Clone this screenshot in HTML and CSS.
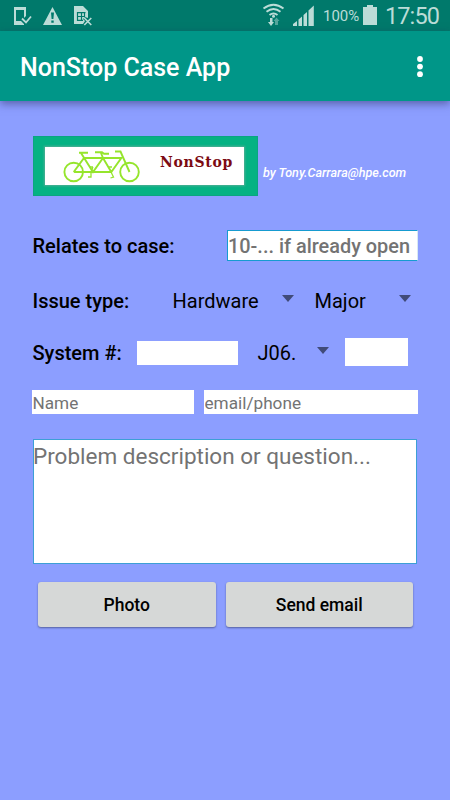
FILE: index.html
```html
<!DOCTYPE html>
<html lang="en">
<head>
<meta charset="utf-8">
<title>NonStop Case App</title>
<link rel="stylesheet" href="styles.css">
</head>
<body>
<header class="status">
  <svg class="status-left" viewBox="0 0 100 31" width="100" height="31">
    <path fill-rule="evenodd" d="M14 7h12v9l-2 2v-8h-8v11h5l3 3v1H14z"/>
    <path d="M22 18.500l4 4 5-6" fill="none" stroke="#bbdcd7" stroke-width="1.800"/>
    <path fill-rule="evenodd" d="M52.500 7L62 25H43zM51 12.500l.6 6.500h1.800l.6-6.500zM51.300 20.500v2.300h2.400v-2.300z"/>
    <path d="M74 6h9l5 5v7l-3-1-2 2 2 2-2 3h-9z"/>
    <path d="M77 12.700h8.500M77 16.500h4M77 20.300h6M77.500 12v9M81.500 12v9M84.500 12v5M82 16.500h3" fill="none" stroke="#00796b" stroke-width="1.200"/>
    <path d="M84.300 18l7 7M91.300 18l-7 7" fill="none" stroke="#bbdcd7" stroke-width="1.600"/>
  </svg>
  <div class="status-right">
    <svg viewBox="0 0 56 31" width="56" height="31">
      <path d="M1.500 8.500Q11.500 1 21.500 8.500M4.500 11.800Q11.500 6.200 18.500 11.800M7.500 15Q11.500 11.800 15.500 15" fill="none" stroke="#bbdcd7" stroke-width="1.900"/>
      <circle cx="11.500" cy="16.300" r="1.500"/>
      <path d="M8 18h2.500v4H12l-3 4-3-4h2z"/>
      <path d="M13 25v-4h-1.500l3-3.500 3 3.500H16v4z" opacity=".45"/>
      <path d="M31 26v-2l4-3v5zM36.500 26v-6.500l3.500-3V26zM41.500 26V15l3.500-3v14zM46.500 26V10.500L51.800 5.500V26z"/>
    </svg>
    <span class="percent">100%</span>
    <svg class="battery" viewBox="0 0 14 20" width="14" height="20"><path d="M0 2h4V0h6v2h4v18H0z"/></svg>
    <span class="clock">17:50</span>
  </div>
</header>
<nav class="appbar">
  <h1>NonStop Case App</h1>
  <svg class="more" viewBox="0 0 6 22" width="6" height="22"><circle cx="3" cy="3" r="2.900"/><circle cx="3" cy="10.600" r="2.900"/><circle cx="3" cy="18.200" r="2.900"/></svg>
</nav>
<main>
  <div class="brand">
    <div class="logo">
      <div class="plate">
        <svg class="bike" viewBox="0 0 82 36" width="82" height="36" fill="none" stroke="#95e52c" stroke-width="1.900">
          <circle cx="11.700" cy="24" r="9.300"/><circle cx="67.500" cy="24" r="9.300"/>
          <path d="M11.700 24L22 10h37.300L49.300 24H11.700M19 5l12 19L41 10l8.300 14M17 4.700h9M41 10l-2.200-5.500M33 4.200h7l2 1.500h5M67.500 24L58.500 3.500H53"/>
          <path d="M28 19h3M31 19l-2 5v5h-3M47 19h3M49 24l2.500 5-3 1" stroke-width="1.300"/>
        </svg>
        <span class="wordmark">NonStop</span>
      </div>
    </div>
    <span class="byline">by Tony.Carrara@hpe.com</span>
  </div>
  <div class="row case-row">
    <label class="label" for="case">Relates to case:</label>
    <input id="case" class="case" placeholder="10-... if already open">
  </div>
  <div class="row issue-row">
    <span class="label">Issue type:</span>
    <div class="select type"><span>Hardware</span><i class="arrow"></i></div>
    <div class="select severity"><span>Major</span><i class="arrow"></i></div>
  </div>
  <div class="row system-row">
    <label class="label" for="system">System #:</label>
    <input id="system" class="system">
    <div class="select version"><span>J06.</span><i class="arrow"></i></div>
    <input class="release" aria-label="Release">
  </div>
  <div class="contact-row">
    <input class="name" placeholder="Name">
    <input class="email" placeholder="email/phone">
  </div>
  <textarea class="problem" placeholder="Problem description or question..."></textarea>
  <div class="actions">
    <button class="photo">Photo</button>
    <button class="send">Send email</button>
  </div>
</main>
</body>
</html>
```

FILE: styles.css
```css
* { box-sizing: border-box; }
body {
  margin: 0;
  height: 800px;
  overflow: hidden;
  background: #8c9eff;
  color: #000;
  font-family: Roboto, "Liberation Sans", sans-serif;
}
.status {
  height: 31px;
  display: flex;
  justify-content: space-between;
  background: #00796b;
  color: #bbdcd7;
}
.status svg { display: block; fill: #bbdcd7; }
.status-right { display: flex; width: 188px; }
.percent { width: 38px; margin-left: 5px; font-size: 15px; line-height: 33px; white-space: nowrap; }
.battery { margin: 5px 0 0 2px; }
.clock { margin-left: 8px; font-size: 23.5px; line-height: 33px; letter-spacing: -0.9px; white-space: nowrap; }
.status-right > * { flex-shrink: 0; }
.appbar {
  height: 70px;
  display: flex;
  align-items: center;
  justify-content: space-between;
  padding: 2px 27px 0 20px;
  background: #009688;
  color: #fff;
  box-shadow: 0 3px 8px rgba(40, 40, 90, .5);
}
.appbar h1 { margin: 2px 0 0; font-size: 25px; line-height: 30px; font-weight: 500; white-space: nowrap; }
.more { fill: #fff; }
main { padding: 35px 32px 0 33px; }
.brand { display: flex; height: 60px; }
.logo {
  width: 225px;
  height: 60px;
  padding: 10px 11px;
  background: #05b283;
  border: 1px solid #0ba580;
}
.plate {
  display: flex;
  height: 38px;
  width: 199px;
  background: #fff;
  box-shadow: 0 0 2px 1px #55ad96;
}
.bike { margin: 1px 0 0 17px; flex: none; }
.wordmark {
  margin-left: 16px;
  color: #7c0a12;
  font: bold 14px/30px "DejaVu Serif", serif;
  letter-spacing: 0.7px;
}
.byline {
  margin: 28px 0 0 5px;
  color: #fff;
  font-size: 12.6px;
  line-height: 18px;
  font-weight: 500;
  font-style: italic;
  white-space: nowrap;
}
.row { display: flex; align-items: center; white-space: nowrap; }
.label { font-size: 20px; font-weight: 500; }
.row .label { margin-left: -0.5px; padding-top: 1px; }
input, textarea {
  display: block;
  margin: 0;
  padding: 0;
  border: 0;
  border-radius: 0;
  outline: 0;
  background: #fff;
  font-family: inherit;
}
input::placeholder, textarea::placeholder { color: #737373; opacity: 1; }
.case-row { margin-top: 34px; height: 31px; }
.case-row .label { width: 194.5px; }
.case {
  width: 191px;
  height: 31px;
  padding-top: 1px;
  border: 1px solid #169bd0;
  border-right-color: #d8e8f5;
  font-size: 19.9px;
  font-weight: 500;
}
.issue-row { margin-top: 24px; height: 30px; }
.issue-row .label { width: 140px; }
.select { display: flex; align-items: center; justify-content: space-between; font-size: 20px; }
.select span { padding-top: 1px; }
.arrow {
  border: 6px solid transparent;
  border-top: 7px solid #414b79;
  border-bottom: 0;
  margin-bottom: 4px;
}
.type { width: 121px; }
.severity { width: 96px; margin-left: 21px; }
.system-row { margin-top: 23px; height: 28px; }
.system-row .label { width: 104.5px; }
.system { width: 101px; height: 24px; margin-top: 2px; }
.version { width: 71px; margin-left: 20px; }
.version span { margin-left: -0.5px; }
.version .arrow { margin-bottom: 3px; }
.release { width: 63px; height: 28px; margin-left: 16px; }
.contact-row { display: flex; gap: 10px; margin: 24px 0 0 -1px; height: 24px; }
.contact-row input { height: 24px; font-size: 17.2px; padding: 2px 0 0 0.5px; }
.name { width: 162px; }
.email { width: 214px; }
.problem {
  width: 384px;
  height: 125px;
  margin-top: 25px;
  padding-top: 1px;
  border: 1px solid #3d9fd5;
  resize: none;
  font-size: 22.5px;
  line-height: 30px;
  text-indent: -1px;
  overflow: hidden;
}
.actions { display: flex; gap: 10px; margin: 18px 0 0 4.5px; }
.actions button {
  height: 45px;
  padding: 1px 0 0;
  border: 0;
  border-radius: 3px;
  background: #d6d8d7;
  color: #000;
  font: 500 17.5px Roboto, sans-serif;
  box-shadow: 0 1px 2px rgba(40, 45, 80, .55);
}
.actions .photo { width: 178.5px; }
.actions .send { width: 186.5px; }
```
